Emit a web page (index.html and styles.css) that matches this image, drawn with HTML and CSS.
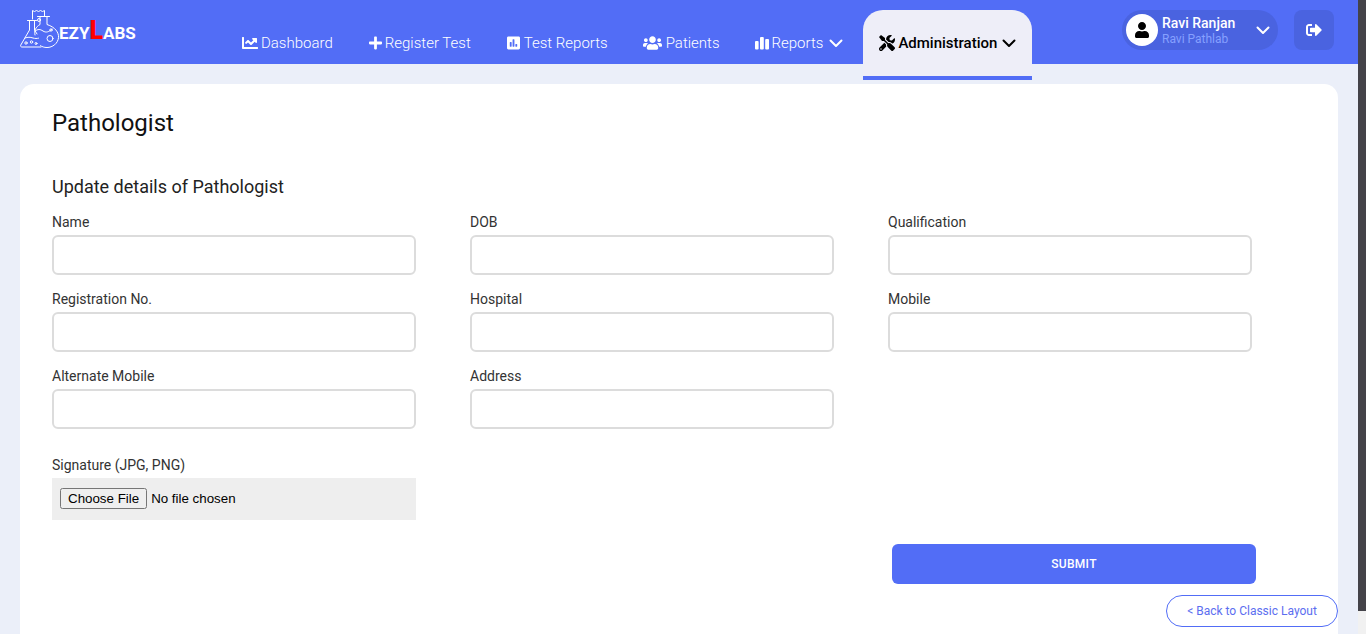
FILE: index.html
```html
<!DOCTYPE html>
<html lang="en">
<head>
<meta charset="utf-8">
<title>Pathologist</title>
<link rel="stylesheet" href="styles.css">
</head>
<body>
<div class="page">
  <header class="topbar">
    <a class="logo">
      <svg class="logo-mark" viewBox="20 8 40 42" fill="none" stroke="#fff" stroke-width="1" stroke-linejoin="round" stroke-linecap="round">
        <path d="M32.500 19V10.500l2 1 2-1 2 1 2-1 2 1 2-1V16.500"/>
        <path d="M27.500 20.500h9M29.500 20.500V30L20.800 45c-.6 1.200 0 2 1.200 2h19"/>
        <path d="M34.500 20.500V30l2.500 4"/>
        <path d="M37.500 16.500h12M40 16.500V24.500C35.500 27 34 31 35 35M47 16.500V24.500c8 2.500 12 8 11.500 13-.5 6-6 10-11.500 10-3 0-5-.8-6.500-1.800"/>
        <path d="M35 31c3-2 5-2 8 0s6 1 9-2M25 38c3-1 5-1 8 0 2 .6 4 .6 5.500.2"/>
        <circle cx="50" cy="38.500" r="3"/>
        <circle cx="39" cy="20" r="1.500"/>
        <circle cx="26" cy="43" r="1.200"/>
        <circle cx="31.500" cy="42" r="1.200"/>
        <circle cx="36" cy="43.500" r="1"/>
        <circle cx="51" cy="30" r="1.200"/>
      </svg>
      <span class="logo-text">EZY<b>L</b>ABS</span>
    </a>
    <nav class="nav">
      <a class="nav-item">
        <svg class="ico" viewBox="0 0 512 512"><path d="M496 384H64V80c0-8.840-7.160-16-16-16H16C7.160 64 0 71.160 0 80v336c0 17.670 14.330 32 32 32h464c8.840 0 16-7.160 16-16v-32c0-8.840-7.160-16-16-16zM464 96H345.940c-21.380 0-32.090 25.850-16.970 40.970l32.400 32.400L288 242.750l-73.370-73.370c-12.500-12.500-32.760-12.500-45.250 0l-68.690 68.690c-6.250 6.250-6.250 16.380 0 22.630l22.620 22.620c6.250 6.250 16.380 6.250 22.630 0L192 237.250l73.370 73.370c12.500 12.500 32.760 12.500 45.250 0l96-96 32.400 32.400c15.120 15.120 40.970 4.410 40.970-16.970V112c0-8.840-7.160-16-16-16z"/></svg>
        Dashboard
      </a>
      <a class="nav-item">
        <svg class="ico ico-plus" viewBox="0 0 448 512"><path d="M416 208H272V64c0-17.670-14.330-32-32-32h-32c-17.670 0-32 14.330-32 32v144H32c-17.670 0-32 14.330-32 32v32c0 17.670 14.330 32 32 32h144v144c0 17.670 14.330 32 32 32h32c17.670 0 32-14.330 32-32V304h144c17.670 0 32-14.330 32-32v-32c0-17.670-14.330-32-32-32z"/></svg>
        Register Test
      </a>
      <a class="nav-item">
        <svg class="ico ico-poll" viewBox="0 0 448 512"><path d="M400 32H48C21.500 32 0 53.500 0 80v352c0 26.500 21.500 48 48 48h352c26.500 0 48-21.500 48-48V80c0-26.500-21.500-48-48-48zM160 368c0 8.840-7.160 16-16 16h-32c-8.840 0-16-7.160-16-16V240c0-8.840 7.160-16 16-16h32c8.840 0 16 7.160 16 16v128zm96 0c0 8.840-7.160 16-16 16h-32c-8.840 0-16-7.160-16-16V144c0-8.840 7.160-16 16-16h32c8.840 0 16 7.160 16 16v224zm96 0c0 8.840-7.160 16-16 16h-32c-8.840 0-16-7.160-16-16v-64c0-8.840 7.160-16 16-16h32c8.840 0 16 7.160 16 16v64z"/></svg>
        Test Reports
      </a>
      <a class="nav-item item-patients">
        <svg class="ico ico-users" viewBox="0 0 640 512"><path d="M96 224c35.300 0 64-28.700 64-64s-28.700-64-64-64-64 28.700-64 64 28.700 64 64 64zm448 0c35.300 0 64-28.700 64-64s-28.700-64-64-64-64 28.700-64 64 28.700 64 64 64zm32 32h-64c-17.600 0-33.500 7.100-45.100 18.600 40.300 22.100 68.900 62 75.100 109.400h66c17.700 0 32-14.300 32-32v-32c0-35.300-28.700-64-64-64zm-256 0c61.900 0 112-50.100 112-112S381.900 32 320 32 208 82.100 208 144s50.100 112 112 112zm76.800 32h-8.300c-20.800 10-43.900 16-68.500 16s-47.600-6-68.500-16h-8.300C179.600 288 128 339.600 128 403.200V432c0 26.500 21.500 48 48 48h288c26.500 0 48-21.500 48-48v-28.800c0-63.600-51.600-115.200-115.200-115.200zm-223.700-13.400C161.500 263.100 145.600 256 128 256H64c-35.300 0-64 28.700-64 64v32c0 17.700 14.300 32 32 32h65.900c6.300-47.400 34.900-87.300 75.200-109.400z"/></svg>
        Patients
      </a>
      <a class="nav-item item-reports">
        <svg class="ico ico-bars" viewBox="0 0 14 14"><rect x="0" y="5" width="3.600" height="8.500" rx="1"/><rect x="5" y="1" width="3.800" height="12.500" rx="1"/><rect x="10.200" y="3" width="3.800" height="10.500" rx="1"/></svg>
        Reports
        <svg class="chev" viewBox="0 0 14 9"><path d="M1.500 1.500 7 7l5.500-5.500"/></svg>
      </a>
      <a class="nav-item active">
        <svg class="ico ico-tools" viewBox="0 0 512 512"><path d="M501.100 395.700L384 278.600c-23.100-23.100-57.600-27.600-85.400-13.900L192 158.100V96L64 0 0 64l96 128h62.100l106.600 106.600c-13.600 27.800-9.200 62.300 13.900 85.400l117.100 117.100c14.600 14.600 38.200 14.600 52.700 0l52.700-52.700c14.500-14.600 14.500-38.200 0-52.700zM331.700 225c28.300 0 54.900 11 74.900 31l19.400 19.400c15.800-6.900 30.800-16.500 43.800-29.500 37.100-37.100 49.700-89.300 37.900-136.700-2.200-9-13.500-12.100-20.100-5.500l-74.400 74.400-67.900-11.300L334 98.900l74.400-74.400c6.600-6.600 3.400-17.900-5.700-20.200-47.400-11.700-99.600.9-136.600 37.900-28.500 28.500-41.900 66.100-41.200 103.600l82.100 82.100c8.100-1.900 16.500-2.900 24.700-2.900zm-103.900 82l-56.700-56.700L18.700 402.800c-25 25-25 65.500 0 90.500s65.500 25 90.500 0l123.600-123.600c-7.600-19.900-9.900-41.600-5-62.700zM64 472c-13.200 0-24-10.800-24-24 0-13.300 10.700-24 24-24s24 10.700 24 24c0 13.200-10.700 24-24 24z"/></svg>
        Administration
        <svg class="chev" viewBox="0 0 14 9"><path d="M1.500 1.500 7 7l5.500-5.500"/></svg>
      </a>
    </nav>
    <div class="account">
      <div class="profile">
        <span class="avatar">
          <svg viewBox="0 0 448 512"><path d="M224 256c70.700 0 128-57.300 128-128S294.700 0 224 0 96 57.300 96 128s57.300 128 128 128zm89.600 32h-16.700c-22.200 10.200-46.900 16-72.900 16s-50.600-5.800-72.900-16h-16.700C60.200 288 0 348.200 0 422.400V464c0 26.500 21.500 48 48 48h352c26.500 0 48-21.500 48-48v-41.600c0-74.200-60.200-134.400-134.400-134.400z"/></svg>
        </span>
        <span class="who">
          <span class="who-name">Ravi Ranjan</span>
          <span class="who-lab">Ravi Pathlab</span>
        </span>
        <svg class="chev" viewBox="0 0 14 9"><path d="M1.500 1.500 7 7l5.500-5.500"/></svg>
      </div>
      <a class="logout">
        <svg viewBox="0 0 512 512"><path d="M497 273L329 441c-15 15-41 4.500-41-17v-96H152c-13.300 0-24-10.700-24-24v-96c0-13.300 10.700-24 24-24h136V88c0-21.400 25.900-32 41-17l168 168c9.300 9.400 9.300 24.600 0 34zM192 436v-40c0-6.600-5.400-12-12-12H96c-17.700 0-32-14.300-32-32V160c0-17.700 14.300-32 32-32h84c6.600 0 12-5.400 12-12V76c0-6.600-5.400-12-12-12H96c-53 0-96 43-96 96v192c0 53 43 96 96 96h84c6.600 0 12-5.400 12-12z"/></svg>
      </a>
    </div>
  </header>

  <main class="card">
    <h1 class="title">Pathologist</h1>
    <h2 class="subtitle">Update details of Pathologist</h2>
    <form class="form">
      <div class="grid">
        <div class="field"><label>Name</label><input type="text"></div>
        <div class="field"><label>DOB</label><input type="text"></div>
        <div class="field"><label>Qualification</label><input type="text"></div>
        <div class="field"><label>Registration No.</label><input type="text"></div>
        <div class="field"><label>Hospital</label><input type="text"></div>
        <div class="field"><label>Mobile</label><input type="text"></div>
        <div class="field"><label>Alternate Mobile</label><input type="text"></div>
        <div class="field"><label>Address</label><input type="text"></div>
      </div>
      <div class="field signature">
        <label>Signature (JPG, PNG)</label>
        <div class="file-box"><input type="file"></div>
      </div>
      <button type="button" class="submit">SUBMIT</button>
    </form>
  </main>
</div>
<div class="scrollbar"><div class="thumb"></div></div>
<a class="classic">&lt; Back to Classic Layout</a>
</body>
</html>
```
FILE: styles.css
```css
* { box-sizing: border-box; }
html, body { margin: 0; height: 634px; overflow: hidden; }
body {
  display: flex;
  font-family: Roboto, "Liberation Sans", sans-serif;
  background: #ebeff9;
  color: #222;
}
.page { width: 1358px; height: 634px; overflow: hidden; flex: none; }

.scrollbar { width: 8px; height: 634px; background: #f1f1f1; flex: none; }
.thumb { height: 611px; background: #444349; }

.topbar {
  height: 64px;
  background: #526df6;
  display: flex;
  align-items: flex-start;
  padding: 10px 24px 0 20px;
}
.logo { display: flex; align-items: flex-start; flex: none; width: 118px; }
.logo-mark { width: 40px; height: 42px; margin-top: -2px; flex: none; }
.logo-text {
  font-weight: 700;
  font-size: 17px;
  line-height: 30px;
  color: #fff;
  margin: 8px 0 0 -1px;
  white-space: nowrap;
}
.logo-text b { font-size: 25px; color: #f00; line-height: 20px; }

.nav { display: flex; margin-left: 86px; }
.nav-item {
  height: 70px;
  padding: 0 18px;
  display: flex;
  align-items: center;
  font-size: 15px;
  font-weight: 300;
  color: #fff;
  white-space: nowrap;
  border-bottom: 4px solid transparent;
}
.item-patients { margin-left: -1px; }
.item-reports { margin-left: -1px; }
.nav-item .ico { fill: #fff; width: 16px; height: 16px; margin-right: 3px; flex: none; }
.nav-item .ico-plus { width: 13px; margin-right: 3px; }
.nav-item .ico-poll { width: 13px; margin-right: 4px; }
.nav-item .ico-users { width: 19px; margin-right: 4px; }
.nav-item .ico-bars { width: 14px; margin-right: 3px; }
.nav-item .chev { width: 14px; height: 9px; margin-left: 6px; }
.chev { fill: none; stroke: #fff; stroke-width: 2; stroke-linecap: round; stroke-linejoin: round; flex: none; }
.nav-item.active {
  margin-left: 2px;
  padding: 0 16px;
  background: #eeeef8;
  color: #000;
  font-weight: 500;
  border-radius: 20px 20px 0 0;
  border-bottom-color: #526df6;
}
.nav-item.active .ico { fill: #000; width: 16px; height: 16px; margin-right: 3px; }
.nav-item.active .chev { stroke: #000; margin-left: 5px; }

.account { margin-left: auto; display: flex; gap: 16px; }
.profile {
  width: 156px;
  height: 40px;
  border-radius: 20px;
  background: #4a63e0;
  padding: 0 8px 0 4px;
  display: flex;
  align-items: center;
}
.avatar {
  width: 32px;
  height: 32px;
  border-radius: 50%;
  background: #fff;
  display: flex;
  align-items: center;
  justify-content: center;
  flex: none;
}
.avatar svg { width: 14px; height: 16px; fill: #000; }
.who { display: flex; flex-direction: column; margin-left: 4px; width: 98px; }
.who-name { font-size: 14px; font-weight: 500; line-height: 16px; color: #fff; }
.who-lab { font-size: 12px; line-height: 14px; margin-top: 1px; color: #86a0ff; }
.profile .chev { width: 14px; height: 9px; margin-left: -1px; }
.logout {
  width: 40px;
  height: 40px;
  border-radius: 8px;
  background: #4a63e0;
  display: flex;
  align-items: center;
  justify-content: center;
}
.logout svg { width: 16px; height: 16px; fill: #fff; }

.card {
  width: 1318px;
  height: 560px;
  margin: 20px 0 0 20px;
  padding: 25px 32px 0;
  background: #fff;
  border-radius: 14px 14px 0 0;
}
.title { margin: 0; font-size: 24px; line-height: 28px; font-weight: 400; color: #111; }
.subtitle { margin: 39px 0 16px; font-size: 18px; line-height: 22px; font-weight: 400; color: #222; }

.grid { display: grid; grid-template-columns: repeat(3, 364px); column-gap: 54px; row-gap: 16px; }
.field { display: flex; flex-direction: column; width: 364px; }
.field label { font-size: 14px; line-height: 16px; margin-bottom: 5px; color: #333; }
.field input[type="text"] {
  height: 40px;
  border: 2px solid #dcdcdc;
  border-radius: 6px;
  background: #fff;
}
.signature { margin-top: 28px; }
.file-box { height: 42px; background: #eee; padding: 0 8px 2px; display: flex; align-items: center; }
.file-box input { font-family: "Liberation Sans", Arial, sans-serif; font-size: 13.333px; color: #000; }

.submit {
  display: block;
  width: 364px;
  height: 40px;
  margin: 24px 0 0 840px;
  border: 0;
  border-radius: 6px;
  background: #526df6;
  color: #fff;
  font-family: Roboto, "Liberation Sans", sans-serif;
  font-size: 12px;
  font-weight: 500;
  letter-spacing: 0.3px;
}
.classic {
  position: fixed;
  left: 1166px;
  top: 595px;
  width: 172px;
  height: 32px;
  border: 1px solid #526df6;
  border-radius: 16px;
  background: #fff;
  color: #5c6ef0;
  font-size: 12px;
  line-height: 30px;
  text-align: center;
}
```
